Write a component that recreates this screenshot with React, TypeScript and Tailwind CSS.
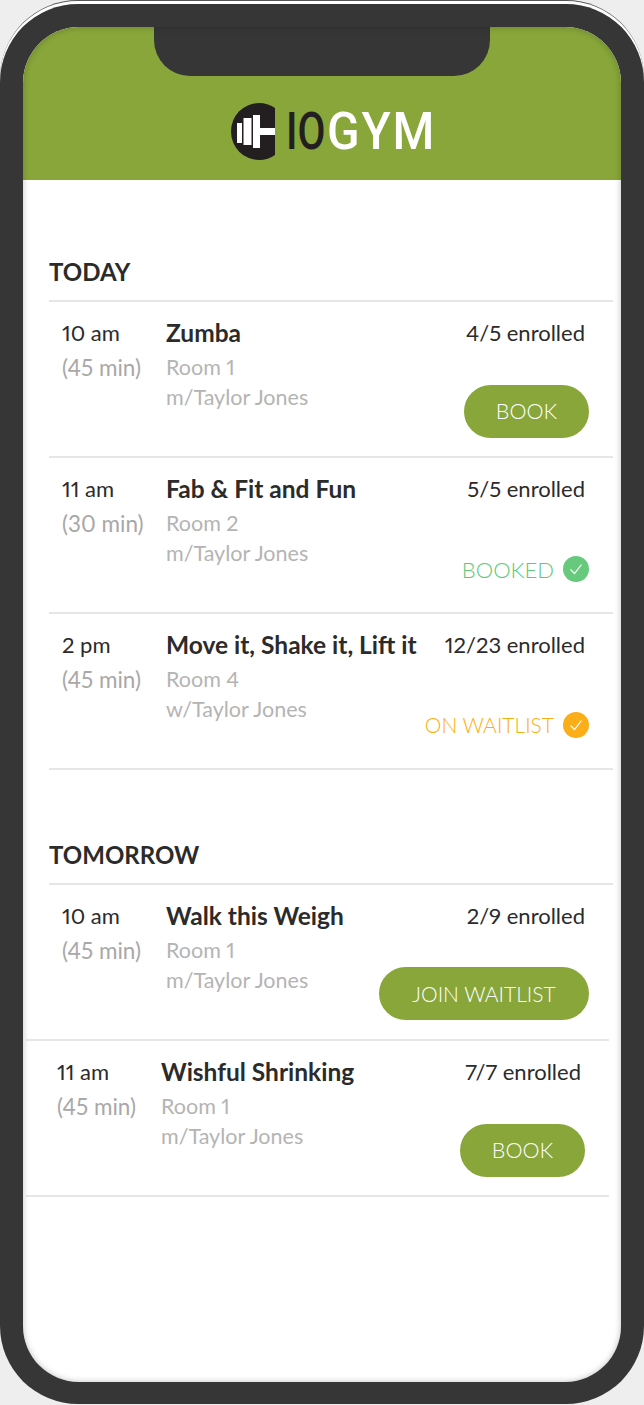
const font = { fontFamily: 'Lato, "Open Sans", sans-serif' };

type Status =
  | { kind: 'button'; label: string; width: string; text: string }
  | { kind: 'booked' }
  | { kind: 'waitlist' };

type GymClass = {
  time: string;
  length: string;
  name: string;
  room: string;
  host: string;
  enrolled: string;
  status: Status;
};

const book: Status = { kind: 'button', label: 'BOOK', width: 'w-[125px]', text: 'text-[21.5px]' };

const today: GymClass[] = [
  { time: '10 am', length: '(45 min)', name: 'Zumba', room: 'Room 1', host: 'm/Taylor Jones', enrolled: '4/5 enrolled', status: book },
  { time: '11 am', length: '(30 min)', name: 'Fab & Fit and Fun', room: 'Room 2', host: 'm/Taylor Jones', enrolled: '5/5 enrolled', status: { kind: 'booked' } },
  { time: '2 pm', length: '(45 min)', name: 'Move it, Shake it, Lift it', room: 'Room 4', host: 'w/Taylor Jones', enrolled: '12/23 enrolled', status: { kind: 'waitlist' } },
];

const tomorrow: GymClass[] = [
  { time: '10 am', length: '(45 min)', name: 'Walk this Weigh', room: 'Room 1', host: 'm/Taylor Jones', enrolled: '2/9 enrolled', status: { kind: 'button', label: 'JOIN WAITLIST', width: 'w-[210px]', text: 'text-[21px]' } },
  { time: '11 am', length: '(45 min)', name: 'Wishful Shrinking', room: 'Room 1', host: 'm/Taylor Jones', enrolled: '7/7 enrolled', status: book },
];

const Logo = () => (
  <div className="flex h-[57px] items-center">
    <svg width="44" height="57" viewBox="0 0 44 57" className="block shrink-0">
      <path d="M28 0 A28 28.5 0 1 0 28 57 C34 57 40 55 44 52 L44 5 C40 2 34 0 28 0 Z" fill="#231f20" />
      <rect x="6" y="20" width="5" height="20" fill="#fff" />
      <rect x="12.5" y="15" width="8" height="27" fill="#fff" />
      <rect x="22" y="12" width="7" height="33" fill="#fff" />
      <rect x="29" y="25" width="15" height="7" fill="#fff" />
    </svg>
    <span className="ml-[11px] w-[41px] origin-left scale-x-[.78] whitespace-nowrap text-[52px] font-medium leading-[57px] text-[#231f20]" style={{ fontFamily: 'Roboto, sans-serif' }}>
      IO
    </span>
    <span className="w-[105px] origin-left scale-x-[.92] whitespace-nowrap text-[52px] font-medium leading-[57px] tracking-[2px] text-white" style={{ fontFamily: 'Roboto, sans-serif' }}>
      GYM
    </span>
  </div>
);

const Check = ({ color }: { color: string }) => (
  <span className={`flex h-[26px] w-[26px] items-center justify-center rounded-full ${color}`}>
    <svg width="14" height="12" viewBox="0 0 14 12" fill="none" stroke="#fff" strokeWidth="1.2">
      <path d="M1.5 6.5 L5.5 10.5 L12.5 1.5" />
    </svg>
  </span>
);

const StatusCell = ({ status }: { status: Status }) => {
  if (status.kind === 'button') {
    return (
      <button className={`h-[53px] ${status.width} rounded-full bg-[#88a63a] ${status.text} font-light text-white`}>
        {status.label}
      </button>
    );
  }
  const booked = status.kind === 'booked';
  return (
    <div className="mb-[12px] flex h-[26px] items-center gap-[9px]">
      <span className={`font-light ${booked ? 'text-[22px] text-[#5fc977]' : 'text-[21px] text-[#fbb010]'}`}>
        {booked ? 'BOOKED' : 'ON WAITLIST'}
      </span>
      <Check color={booked ? 'bg-[#66c97c]' : 'bg-[#fbae17]'} />
    </div>
  );
};

const Row = ({ item, shifted, last }: { item: GymClass; shifted: boolean; last: boolean }) => (
  <div
    className={`flex pr-[24px] ${last ? 'h-[154px]' : 'border-b-2 border-[#e6e6e6]'} ${
      shifted ? '-ml-[23px] mr-[4px] h-[158px] border-y-2 border-[#e6e6e6] pl-[31px]' : 'pl-[13px]'
    } ${!last && !shifted ? 'h-[156px]' : ''}`}
  >
    <div className="w-[104px] shrink-0 pt-[15px] proportional-nums">
      <div className="text-[22px] leading-[32px] text-[#2b2b2b]">{item.time}</div>
      <div className="mt-[3px] text-[22.5px] leading-[32px] text-[#a8a8a8]">{item.length}</div>
    </div>
    <div className="flex-1 pt-[15px] proportional-nums">
      <div className="whitespace-nowrap text-[24.5px] font-bold leading-[32px] text-[#2b2b2b]">{item.name}</div>
      <div className="mt-[3px] text-[21.5px] leading-[30px] text-[#b4b4b4]">{item.room}</div>
      <div className="text-[21.5px] leading-[30px] text-[#b4b4b4]">{item.host}</div>
    </div>
    <div className={`flex flex-col items-end justify-between pt-[15px] ${last ? 'pb-[19px]' : 'pb-[18px]'}`}>
      <div className="whitespace-nowrap pr-[4px] text-[22px] leading-[32px] text-[#2b2b2b] proportional-nums">{item.enrolled}</div>
      <StatusCell status={item.status} />
    </div>
  </div>
);

const Section = ({ title, items, shiftLast }: { title: string; items: GymClass[]; shiftLast?: boolean }) => (
  <section>
    <h2 className="h-[44px] pt-[1px] text-[24px] font-bold leading-[30px] text-[#2b2b2b]">{title}</h2>
    <div className="border-t-2 border-[#e6e6e6]">
      {items.map((item, i) => (
        <Row
          key={item.name}
          item={item}
          shifted={!!shiftLast && i === items.length - 1}
          last={!!shiftLast && i === items.length - 2}
        />
      ))}
    </div>
  </section>
);

export default function App() {
  return (
    <div className="h-[1405px] w-[644px] bg-[#eeeeee]" style={font}>
      <div className="h-[1404px] w-[644px] rounded-[78px] border-t border-[#555555] bg-white pt-[3px]">
        <div className="h-full rounded-[78px] bg-[#363636] px-[23px] pb-[22px] pt-[23px]">
          <div className="relative h-full overflow-hidden rounded-[56px] bg-white">
            <header className="relative flex h-[153px] items-end justify-center bg-[#88a63a] pb-[20px] pl-[18px]">
              <div className="absolute left-[131px] top-0 h-[49px] w-[336px] rounded-b-[36px] bg-[#363636]" />
              <Logo />
            </header>
            <main className="pl-[26px] pr-[8px] pt-[76px]">
              <Section title="TODAY" items={today} />
              <div className="h-[69px]" />
              <Section title="TOMORROW" items={tomorrow} shiftLast />
            </main>
            <div className="pointer-events-none absolute inset-0 rounded-[56px] shadow-[inset_0_0_6px_rgba(0,0,0,0.25)]" />
          </div>
        </div>
      </div>
    </div>
  );
}
